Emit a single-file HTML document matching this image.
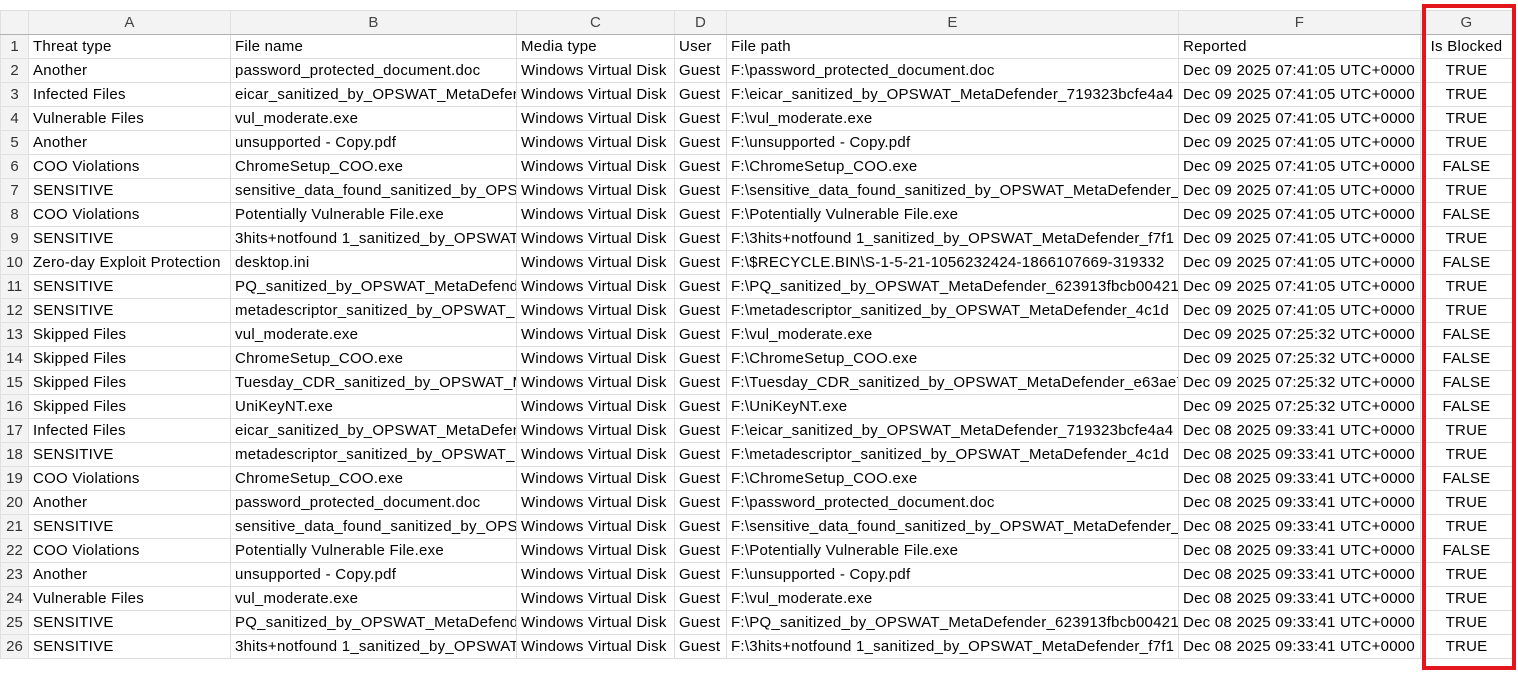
<!DOCTYPE html>
<html><head><meta charset="utf-8"><style>
html,body{margin:0;padding:0;background:#fff;width:1518px;height:674px;overflow:hidden}
body{font-family:"Liberation Sans",Arial,sans-serif;font-size:15px;color:#000;position:relative}
table{position:absolute;left:0;top:10px;border-collapse:collapse;table-layout:fixed;width:1512px}
td{height:23px;border:1px solid #dcdcdc;padding:0;text-indent:4px;white-space:nowrap;overflow:hidden;line-height:23px;letter-spacing:0.25px}
tr.h td{background:#f3f3f3;text-align:center;color:#444;border-color:#e0e0e0;border-bottom:1px solid #b0b0b0;text-indent:0}
td.n{background:#f3f3f3;text-align:center;text-indent:0;color:#333;border-right:1px solid #b0b0b0;border-color:#e0e0e0;letter-spacing:0}
td.c{text-align:center;text-indent:0}
.red{position:absolute;left:1422px;top:4px;width:86px;height:658px;border:4px solid #e3161d}
</style></head><body>
<table>
<colgroup><col style="width:28px"><col style="width:202px"><col style="width:286px"><col style="width:158px"><col style="width:52px"><col style="width:452px"><col style="width:242px"><col style="width:92px"></colgroup>
<tr class="h"><td></td><td>A</td><td>B</td><td>C</td><td>D</td><td>E</td><td>F</td><td>G</td></tr>
<tr><td class="n">1</td><td>Threat type</td><td>File name</td><td>Media type</td><td>User</td><td>File path</td><td>Reported</td><td class="c">Is Blocked</td></tr>
<tr><td class="n">2</td><td>Another</td><td>password_protected_document.doc</td><td>Windows Virtual Disk</td><td>Guest</td><td>F:\password_protected_document.doc</td><td>Dec 09 2025 07:41:05 UTC+0000</td><td class="c">TRUE</td></tr>
<tr><td class="n">3</td><td>Infected Files</td><td>eicar_sanitized_by_OPSWAT_MetaDefender</td><td>Windows Virtual Disk</td><td>Guest</td><td>F:\eicar_sanitized_by_OPSWAT_MetaDefender_719323bcfe4a4</td><td>Dec 09 2025 07:41:05 UTC+0000</td><td class="c">TRUE</td></tr>
<tr><td class="n">4</td><td>Vulnerable Files</td><td>vul_moderate.exe</td><td>Windows Virtual Disk</td><td>Guest</td><td>F:\vul_moderate.exe</td><td>Dec 09 2025 07:41:05 UTC+0000</td><td class="c">TRUE</td></tr>
<tr><td class="n">5</td><td>Another</td><td>unsupported - Copy.pdf</td><td>Windows Virtual Disk</td><td>Guest</td><td>F:\unsupported - Copy.pdf</td><td>Dec 09 2025 07:41:05 UTC+0000</td><td class="c">TRUE</td></tr>
<tr><td class="n">6</td><td>COO Violations</td><td>ChromeSetup_COO.exe</td><td>Windows Virtual Disk</td><td>Guest</td><td>F:\ChromeSetup_COO.exe</td><td>Dec 09 2025 07:41:05 UTC+0000</td><td class="c">FALSE</td></tr>
<tr><td class="n">7</td><td>SENSITIVE</td><td>sensitive_data_found_sanitized_by_OPSWAT</td><td>Windows Virtual Disk</td><td>Guest</td><td>F:\sensitive_data_found_sanitized_by_OPSWAT_MetaDefender_</td><td>Dec 09 2025 07:41:05 UTC+0000</td><td class="c">TRUE</td></tr>
<tr><td class="n">8</td><td>COO Violations</td><td>Potentially Vulnerable File.exe</td><td>Windows Virtual Disk</td><td>Guest</td><td>F:\Potentially Vulnerable File.exe</td><td>Dec 09 2025 07:41:05 UTC+0000</td><td class="c">FALSE</td></tr>
<tr><td class="n">9</td><td>SENSITIVE</td><td>3hits+notfound 1_sanitized_by_OPSWAT_</td><td>Windows Virtual Disk</td><td>Guest</td><td>F:\3hits+notfound 1_sanitized_by_OPSWAT_MetaDefender_f7f1</td><td>Dec 09 2025 07:41:05 UTC+0000</td><td class="c">TRUE</td></tr>
<tr><td class="n">10</td><td>Zero-day Exploit Protection</td><td>desktop.ini</td><td>Windows Virtual Disk</td><td>Guest</td><td>F:\$RECYCLE.BIN\S-1-5-21-1056232424-1866107669-319332</td><td>Dec 09 2025 07:41:05 UTC+0000</td><td class="c">FALSE</td></tr>
<tr><td class="n">11</td><td>SENSITIVE</td><td>PQ_sanitized_by_OPSWAT_MetaDefender</td><td>Windows Virtual Disk</td><td>Guest</td><td>F:\PQ_sanitized_by_OPSWAT_MetaDefender_623913fbcb00421</td><td>Dec 09 2025 07:41:05 UTC+0000</td><td class="c">TRUE</td></tr>
<tr><td class="n">12</td><td>SENSITIVE</td><td>metadescriptor_sanitized_by_OPSWAT_</td><td>Windows Virtual Disk</td><td>Guest</td><td>F:\metadescriptor_sanitized_by_OPSWAT_MetaDefender_4c1d</td><td>Dec 09 2025 07:41:05 UTC+0000</td><td class="c">TRUE</td></tr>
<tr><td class="n">13</td><td>Skipped Files</td><td>vul_moderate.exe</td><td>Windows Virtual Disk</td><td>Guest</td><td>F:\vul_moderate.exe</td><td>Dec 09 2025 07:25:32 UTC+0000</td><td class="c">FALSE</td></tr>
<tr><td class="n">14</td><td>Skipped Files</td><td>ChromeSetup_COO.exe</td><td>Windows Virtual Disk</td><td>Guest</td><td>F:\ChromeSetup_COO.exe</td><td>Dec 09 2025 07:25:32 UTC+0000</td><td class="c">FALSE</td></tr>
<tr><td class="n">15</td><td>Skipped Files</td><td>Tuesday_CDR_sanitized_by_OPSWAT_M</td><td>Windows Virtual Disk</td><td>Guest</td><td>F:\Tuesday_CDR_sanitized_by_OPSWAT_MetaDefender_e63ae7</td><td>Dec 09 2025 07:25:32 UTC+0000</td><td class="c">FALSE</td></tr>
<tr><td class="n">16</td><td>Skipped Files</td><td>UniKeyNT.exe</td><td>Windows Virtual Disk</td><td>Guest</td><td>F:\UniKeyNT.exe</td><td>Dec 09 2025 07:25:32 UTC+0000</td><td class="c">FALSE</td></tr>
<tr><td class="n">17</td><td>Infected Files</td><td>eicar_sanitized_by_OPSWAT_MetaDefender</td><td>Windows Virtual Disk</td><td>Guest</td><td>F:\eicar_sanitized_by_OPSWAT_MetaDefender_719323bcfe4a4</td><td>Dec 08 2025 09:33:41 UTC+0000</td><td class="c">TRUE</td></tr>
<tr><td class="n">18</td><td>SENSITIVE</td><td>metadescriptor_sanitized_by_OPSWAT_</td><td>Windows Virtual Disk</td><td>Guest</td><td>F:\metadescriptor_sanitized_by_OPSWAT_MetaDefender_4c1d</td><td>Dec 08 2025 09:33:41 UTC+0000</td><td class="c">TRUE</td></tr>
<tr><td class="n">19</td><td>COO Violations</td><td>ChromeSetup_COO.exe</td><td>Windows Virtual Disk</td><td>Guest</td><td>F:\ChromeSetup_COO.exe</td><td>Dec 08 2025 09:33:41 UTC+0000</td><td class="c">FALSE</td></tr>
<tr><td class="n">20</td><td>Another</td><td>password_protected_document.doc</td><td>Windows Virtual Disk</td><td>Guest</td><td>F:\password_protected_document.doc</td><td>Dec 08 2025 09:33:41 UTC+0000</td><td class="c">TRUE</td></tr>
<tr><td class="n">21</td><td>SENSITIVE</td><td>sensitive_data_found_sanitized_by_OPSWAT</td><td>Windows Virtual Disk</td><td>Guest</td><td>F:\sensitive_data_found_sanitized_by_OPSWAT_MetaDefender_</td><td>Dec 08 2025 09:33:41 UTC+0000</td><td class="c">TRUE</td></tr>
<tr><td class="n">22</td><td>COO Violations</td><td>Potentially Vulnerable File.exe</td><td>Windows Virtual Disk</td><td>Guest</td><td>F:\Potentially Vulnerable File.exe</td><td>Dec 08 2025 09:33:41 UTC+0000</td><td class="c">FALSE</td></tr>
<tr><td class="n">23</td><td>Another</td><td>unsupported - Copy.pdf</td><td>Windows Virtual Disk</td><td>Guest</td><td>F:\unsupported - Copy.pdf</td><td>Dec 08 2025 09:33:41 UTC+0000</td><td class="c">TRUE</td></tr>
<tr><td class="n">24</td><td>Vulnerable Files</td><td>vul_moderate.exe</td><td>Windows Virtual Disk</td><td>Guest</td><td>F:\vul_moderate.exe</td><td>Dec 08 2025 09:33:41 UTC+0000</td><td class="c">TRUE</td></tr>
<tr><td class="n">25</td><td>SENSITIVE</td><td>PQ_sanitized_by_OPSWAT_MetaDefender</td><td>Windows Virtual Disk</td><td>Guest</td><td>F:\PQ_sanitized_by_OPSWAT_MetaDefender_623913fbcb00421</td><td>Dec 08 2025 09:33:41 UTC+0000</td><td class="c">TRUE</td></tr>
<tr><td class="n">26</td><td>SENSITIVE</td><td>3hits+notfound 1_sanitized_by_OPSWAT_</td><td>Windows Virtual Disk</td><td>Guest</td><td>F:\3hits+notfound 1_sanitized_by_OPSWAT_MetaDefender_f7f1</td><td>Dec 08 2025 09:33:41 UTC+0000</td><td class="c">TRUE</td></tr>
</table>
<div class="red"></div>
</body></html>
